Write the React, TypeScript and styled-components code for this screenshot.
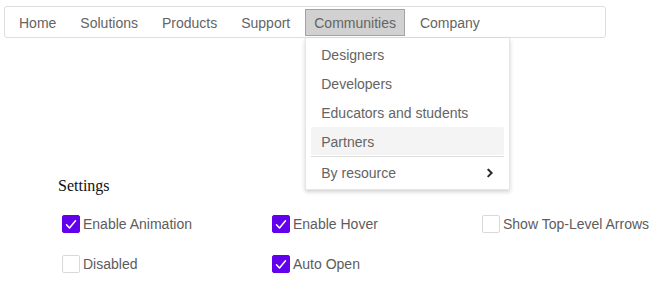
import React, { useState } from "react";
import styled, { createGlobalStyle, css } from "styled-components";

const Global = createGlobalStyle`
  html, body { margin: 0; padding: 0; background: #fff; }
  body { font-family: "Liberation Sans", Arial, sans-serif; }
  * { box-sizing: border-box; }
`;

const Page = styled.div`
  padding: 6px 0 0 4px;
  width: 664px;
  height: 282px;
  overflow: hidden;
`;

const MenuBar = styled.nav`
  display: flex;
  align-items: flex-start;
  gap: 6px;
  width: 602px;
  height: 32px;
  padding: 2px 5px 1px;
  border: 1px solid #dedede;
  border-radius: 3px;
`;

const ItemWrap = styled.div`
  position: relative;
`;

const TopItem = styled.div<{ $active?: boolean }>`
  height: 27px;
  padding: 1px 8px 0;
  border: 1px solid transparent;
  font-size: 14px;
  line-height: 24px;
  color: #646464;
  white-space: nowrap;
  ${(p) =>
    p.$active &&
    css`
      background: #d1d1d1;
      border-color: #a3a3a3;
    `}
`;

const Dropdown = styled.div`
  position: absolute;
  top: calc(100% + 2px);
  left: 0;
  width: 205px;
  padding: 2px 5px 3px;
  background: #fff;
  border: 1px solid #e6e6e6;
  border-top: none;
  box-shadow: 0 2px 4px rgba(0, 0, 0, 0.18);
  z-index: 10;
`;

const DropItem = styled.div<{ $hover?: boolean }>`
  display: flex;
  align-items: center;
  justify-content: space-between;
  height: 28px;
  margin-bottom: 1px;
  padding: 1px 10px 0;
  font-size: 14px;
  color: #646464;
  border-radius: 2px;
  white-space: nowrap;
  background: ${(p) => (p.$hover ? "#f4f4f4" : "transparent")};
  &:last-child { margin-bottom: 0; }
`;

const Separator = styled.div`
  height: 1px;
  margin-bottom: 1px;
  background: #dddddd;
`;

const Settings = styled.section`
  margin: 139px 0 0 54px;
`;

const Title = styled.div`
  font-family: "Liberation Serif", "Times New Roman", serif;
  font-size: 16px;
  line-height: 18px;
  color: #111;
`;

const Grid = styled.div`
  display: grid;
  grid-template-columns: repeat(3, 210px);
  row-gap: 22px;
  margin-top: 20px;
`;

const CheckLabel = styled.label`
  display: flex;
  align-items: center;
  height: 18px;
  padding-left: 4px;
  font-size: 14px;
  color: #5c5c5c;
  white-space: nowrap;
  cursor: pointer;
`;

const HiddenInput = styled.input`
  position: absolute;
  opacity: 0;
  width: 0;
  height: 0;
  margin: 0;
`;

const Box = styled.span<{ $checked: boolean }>`
  display: inline-flex;
  align-items: center;
  justify-content: center;
  width: 18px;
  height: 18px;
  margin-right: 3px;
  border-radius: 2px;
  flex-shrink: 0;
  ${(p) =>
    p.$checked
      ? css`
          background: #6200ee;
          border: 1px solid #6200ee;
        `
      : css`
          background: #fff;
          border: 1px solid #d9d9d9;
        `}
`;

const Check: React.FC<{ label: string; initial: boolean }> = ({ label, initial }) => {
  const [on, setOn] = useState(initial);
  return (
    <CheckLabel>
      <HiddenInput type="checkbox" checked={on} onChange={() => setOn(!on)} />
      <Box $checked={on}>
        {on && (
          <svg width="16" height="16" viewBox="0 0 16 16" fill="none">
            <polyline
              points="3.5,8.8 6.5,12 12.5,4.8"
              stroke="#fff"
              strokeWidth="1.5"
              strokeLinecap="round"
              strokeLinejoin="round"
            />
          </svg>
        )}
      </Box>
      {label}
    </CheckLabel>
  );
};

const Chevron = () => (
  <svg width="8" height="10" viewBox="0 0 8 10" fill="none">
    <path d="M2.4 1.8 L5.6 5 L2.4 8.2" stroke="#2a2a2a" strokeWidth="2" strokeLinecap="square" />
  </svg>
);

export default function App() {
  const top = ["Home", "Solutions", "Products", "Support"];
  return (
    <>
      <Global />
      <Page>
        <MenuBar>
          {top.map((t) => (
            <ItemWrap key={t}>
              <TopItem>{t}</TopItem>
            </ItemWrap>
          ))}
          <ItemWrap>
            <TopItem $active>Communities</TopItem>
            <Dropdown>
              <DropItem>Designers</DropItem>
              <DropItem>Developers</DropItem>
              <DropItem>Educators and students</DropItem>
              <DropItem $hover>Partners</DropItem>
              <Separator />
              <DropItem>
                By resource
                <Chevron />
              </DropItem>
            </Dropdown>
          </ItemWrap>
          <ItemWrap>
            <TopItem>Company</TopItem>
          </ItemWrap>
        </MenuBar>
        <Settings>
          <Title>Settings</Title>
          <Grid>
            <Check label="Enable Animation" initial={true} />
            <Check label="Enable Hover" initial={true} />
            <Check label="Show Top-Level Arrows" initial={false} />
            <Check label="Disabled" initial={false} />
            <Check label="Auto Open" initial={true} />
          </Grid>
        </Settings>
      </Page>
    </>
  );
}
